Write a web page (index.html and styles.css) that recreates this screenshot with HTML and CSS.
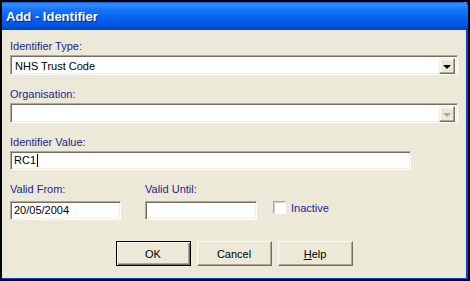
FILE: index.html
```html
<!DOCTYPE html>
<html lang="en">
<head>
    <meta charset="UTF-8">
    <title>Add - Identifier</title>
    <link rel="stylesheet" href="styles.css">
</head>
<body>
    <div class="window">
        <div class="title-bar">Add - Identifier</div>
        <div class="content">
            <div class="field">
                <div class="label">Identifier Type:</div>
                <div class="combo">
                    <div class="combo-text">NHS Trust Code</div>
                    <div class="combo-button"><span class="arrow"></span></div>
                </div>
            </div>
            <div class="field">
                <div class="label">Organisation:</div>
                <div class="combo">
                    <div class="combo-text"></div>
                    <div class="combo-button"><span class="arrow disabled"></span></div>
                </div>
            </div>
            <div class="field">
                <div class="label">Identifier Value:</div>
                <div class="textbox textbox-value">RC1<span class="caret"></span></div>
            </div>
            <div class="row">
                <div class="col col-from">
                    <div class="label label-date">Valid From:</div>
                    <div class="textbox">20/05/2004</div>
                </div>
                <div class="col col-until">
                    <div class="label label-date">Valid Until:</div>
                    <div class="textbox"></div>
                </div>
                <label class="check">
                    <span class="checkbox"></span>
                    <span class="check-text">Inactive</span>
                </label>
            </div>
            <div class="buttons">
                <button class="btn btn-default">OK</button>
                <button class="btn">Cancel</button>
                <button class="btn"><u>H</u>elp</button>
            </div>
        </div>
    </div>
</body>
</html>
```

FILE: styles.css
```css
* {
    margin: 0;
    padding: 0;
    box-sizing: border-box;
}

body {
    width: 470px;
    height: 281px;
    background-color: #000;
    padding: 2px;
    font-family: "Liberation Sans", Arial, sans-serif;
    font-size: 11px;
    overflow: hidden;
}

.window {
    width: 466px;
    height: 277px;
    background: #ece9d8;
    border-right: 2px solid #0b3fd6;
    border-bottom: 1px solid #0b3fd6;
    display: flex;
    flex-direction: column;
}

.title-bar {
    height: 28px;
    margin-right: -2px;
    padding-left: 4px;
    display: flex;
    align-items: center;
    color: #fff;
    font-weight: bold;
    font-size: 13px;
    text-shadow: 1px 1px #0b2a9c;
    border-top-right-radius: 5px;
    background: linear-gradient(to bottom, #0a5ae8 0%, #3b8dfc 8%, #2a83ff 16%, #1473fb 30%, #0764f0 55%, #015ae6 75%, #0052df 88%, #0040c8 100%);
}

.content {
    padding: 10px 8px 0 8px;
    display: flex;
    flex-direction: column;
}

.label {
    height: 13px;
    line-height: 13px;
    color: #1e1e96;
    margin-bottom: 2px;
}

.field {
    margin-bottom: 13px;
}

/* sunken 3d border */
.combo,
.textbox {
    background: #fff;
    border: 1px solid;
    border-color: #aca899 #fff #fff #aca899;
    box-shadow: inset 1px 1px #716f64, inset -1px -1px #f1efe2;
}

.combo {
    width: 448px;
    height: 20px;
    padding: 2px;
    display: flex;
}

.combo-text {
    flex: 1;
    padding-left: 2px;
    line-height: 16px;
    color: #000;
}

.combo-button {
    width: 16px;
    height: 16px;
    background: #ece9d8;
    border: 1px solid;
    border-color: #f1efe2 #716f64 #716f64 #f1efe2;
    box-shadow: inset -1px -1px #aca899, inset 1px 1px #fff;
    display: flex;
    align-items: center;
    justify-content: center;
}

.arrow {
    width: 0;
    height: 0;
    border-left: 4px solid transparent;
    border-right: 4px solid transparent;
    border-top: 4px solid #000;
    margin-top: 1px;
}

.arrow.disabled {
    border-top-color: #aca899;
}

.textbox {
    height: 19px;
    padding-left: 3px;
    line-height: 17px;
    color: #000;
}

.textbox-value {
    width: 401px;
    display: flex;
    align-items: center;
}

.caret {
    display: inline-block;
    width: 1px;
    height: 13px;
    background: #000;
    margin-left: 1px;
}

.row {
    display: flex;
    align-items: flex-start;
}

.label-date {
    margin-bottom: 5px;
}

.col-from {
    width: 111px;
}

.col-until {
    width: 112px;
    margin-left: 24px;
}

.check {
    display: flex;
    align-items: center;
    margin-left: 16px;
    margin-top: 18px;
}

.checkbox {
    width: 13px;
    height: 13px;
    background: #fff;
    border: 1px solid;
    border-color: #aca899 #fff #fff #aca899;
    box-shadow: inset 1px 1px #d4d0c8;
}

.check-text {
    margin-left: 5px;
    color: #1e1e96;
}

.buttons {
    display: flex;
    justify-content: center;
    gap: 6px;
    margin-top: 21px;
}

.btn {
    width: 75px;
    height: 25px;
    font-family: "Liberation Sans", Arial, sans-serif;
    font-size: 11px;
    color: #000;
    background: #ece9d8;
    border: 1px solid;
    border-color: #fff #716f64 #716f64 #fff;
    box-shadow: inset -1px -1px #aca899;
}

.btn-default {
    border: 1px solid #000;
    box-shadow: inset 1px 1px #fff, inset -1px -1px #716f64, inset -2px -2px #aca899;
}
```
